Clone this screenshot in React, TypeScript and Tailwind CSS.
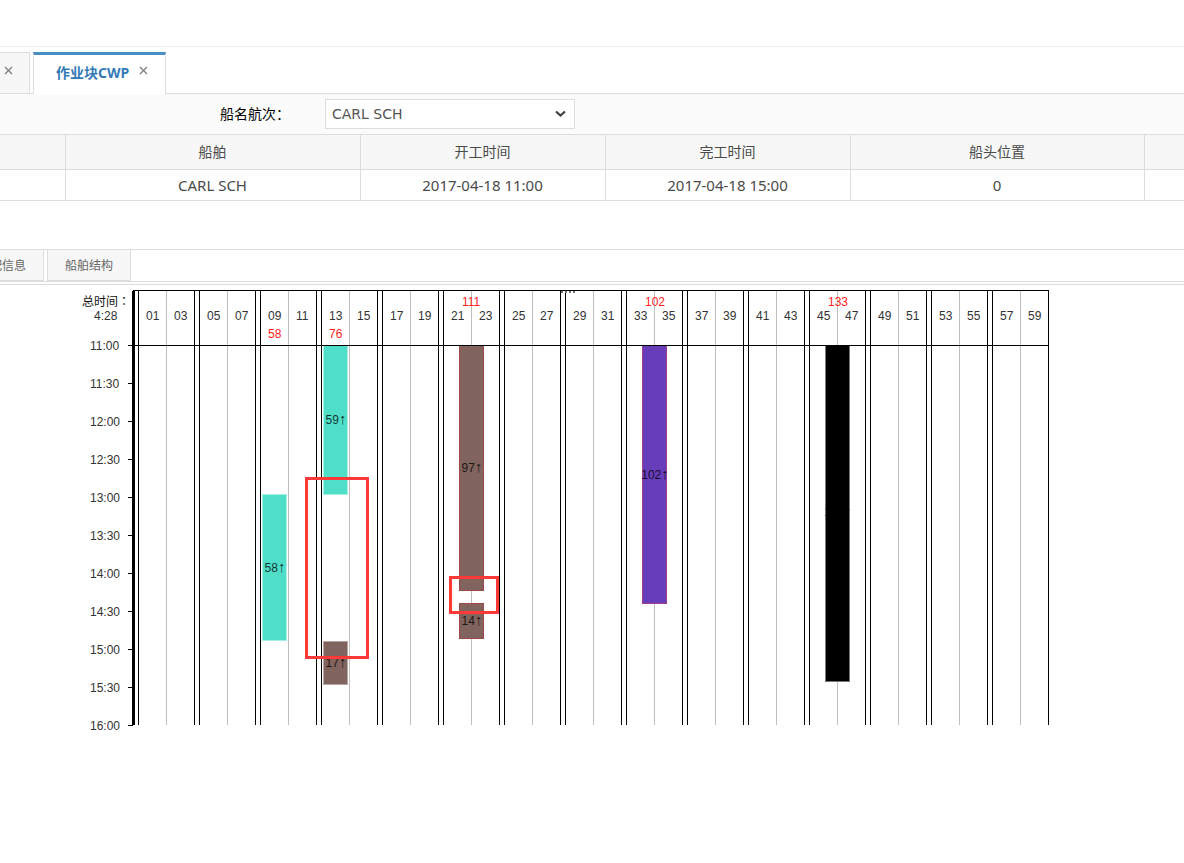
import React from "react";

type Block = {
  x: number;
  top: number;
  bottom: number;
  fill: string;
  stroke: string;
  label: string;
  baseline: number;
};

const BAY_PITCH = 61;
const FIRST_BAY = 68;
const AXIS_TOP = 59;

const bays = Array.from({ length: 15 }, (_, i) => ({
  x: FIRST_BAY + i * BAY_PITCH,
  left: String(i * 4 + 1).padStart(2, "0"),
  right: String(i * 4 + 3).padStart(2, "0"),
}));

const times = [
  "11:00",
  "11:30",
  "12:00",
  "12:30",
  "13:00",
  "13:30",
  "14:00",
  "14:30",
  "15:00",
  "15:30",
  "16:00",
];

const totals = [
  { x: 198, y: 52, value: "58" },
  { x: 259, y: 52, value: "76" },
  { x: 392, y: 20, value: "111" },
  { x: 575, y: 20, value: "102" },
  { x: 758, y: 20, value: "133" },
];

const blocks: Block[] = [
  { x: 192, top: 208, bottom: 355, fill: "#4fdfc9", stroke: "#a5efe4", label: "58", baseline: 286 },
  { x: 253, top: 59, bottom: 209, fill: "#4fdfc9", stroke: "#a5efe4", label: "59", baseline: 138 },
  { x: 253, top: 355, bottom: 399, fill: "#80645d", stroke: "#b5a5a1", label: "17", baseline: 381 },
  { x: 389, top: 59, bottom: 305, fill: "#80645d", stroke: "#a04848", label: "97", baseline: 186 },
  { x: 389, top: 317, bottom: 353, fill: "#80645d", stroke: "#a04848", label: "14", baseline: 339 },
  { x: 572, top: 59, bottom: 318, fill: "#673dba", stroke: "#a03f92", label: "102", baseline: 193 },
  { x: 755, top: 59, bottom: 396, fill: "#000000", stroke: "#777777", label: "133", baseline: 230 },
];

const columns = ["", "船舶", "开工时间", "完工时间", "船头位置", ""];
const voyage = ["", "CARL SCH", "2017-04-18 11:00", "2017-04-18 15:00", "0", ""];

function CloseIcon() {
  return (
    <svg width="9" height="9" viewBox="0 0 9 9" aria-hidden="true">
      <path d="M1 1l7 7M8 1L1 8" stroke="#7d7d85" strokeWidth="1.3" fill="none" />
    </svg>
  );
}

function WorkPlanChart() {
  return (
    <svg
      className="ml-[70px] block font-['Liberation_Sans','Noto_Sans_CJK_SC',sans-serif] text-xs"
      width="990"
      height="450"
      viewBox="0 0 990 450"
      role="img"
      aria-label="作业块CWP"
    >
      <g fill="#333333">
        <text x="12" y="20" fill="#111111">
          总时间
          <tspan className="font-['Noto_Sans_CJK_TC',sans-serif]">：</tspan>
        </text>
        <text x="24" y="34">4:28</text>
        {times.map((time, i) => (
          <text key={time} x="20" y={64 + i * 38}>
            {time}
          </text>
        ))}
      </g>

      <g shapeRendering="crispEdges">
        {bays.map((bay) => (
          <g key={bay.left}>
            <rect x={bay.x + 28} y="5" width="1" height="434" fill="#bfbfbf" />
            <rect x={bay.x} y="4" width="1" height="435" />
            <rect x={bay.x + 56} y="4" width="1" height="435" />
          </g>
        ))}
        <rect x="63" y="4" width="916" height="1" />
        <rect x="62" y="5" width="3" height="434" />
        {times.map((time, i) => (
          <rect key={time} x="58" y={AXIS_TOP + i * 38} width="5" height="1" />
        ))}
        {[491, 495, 499, 503].map((x) => (
          <rect key={x} x={x} y="5" width="2" height="2" fill="#777777" />
        ))}
      </g>

      <g fill="#333333">
        {bays.map((bay) => (
          <g key={bay.left}>
            <text x={bay.x + 8} y="34">{bay.left}</text>
            <text x={bay.x + 36} y="34">{bay.right}</text>
          </g>
        ))}
      </g>
      <g fill="#ff2222">
        {totals.map((total) => (
          <text key={total.x} x={total.x} y={total.y}>{total.value}</text>
        ))}
      </g>

      {blocks.map((block) => (
        <g key={block.label}>
          <g shapeRendering="crispEdges">
            <rect x={block.x} y={block.top} width="25" height={block.bottom - block.top} fill={block.stroke} />
            <rect x={block.x + 1} y={block.top + 1} width="23" height={block.bottom - block.top - 2} fill={block.fill} />
          </g>
          <text x={block.x + 13} y={block.baseline} textAnchor="middle" fill="#000000" fillOpacity="0.8">
            {block.label}
            <tspan fontSize="15">↑</tspan>
          </text>
        </g>
      ))}
      <rect x="63" y={AXIS_TOP} width="916" height="1" shapeRendering="crispEdges" />

      <g fill="none" stroke="#ff3838" strokeWidth="3">
        <rect x="236.5" y="192.5" width="61" height="179" />
        <rect x="380.5" y="291.5" width="47" height="35" />
      </g>
    </svg>
  );
}

export default function App() {
  return (
    <div className="min-h-screen overflow-x-hidden bg-white font-['Noto_Sans','Noto_Sans_CJK_SC',sans-serif] text-[#4a4a4a]">
      <header className="h-[47px] border-b border-[#eeeeee]" />

      <nav className="mt-[5px] flex h-[42px] items-stretch gap-[3px] border-b border-[#dddddd]">
        <div className="flex w-[30px] border-t border-r border-[#dddddd] bg-[#f7f7f7] pt-[13px] pl-1">
          <button type="button" aria-label="关闭" className="h-[9px] w-[9px]">
            <CloseIcon />
          </button>
        </div>
        <div className="-mb-px flex w-[133px] border-x border-t-3 border-x-[#dddddd] border-t-[#4a8fc3] bg-white pl-[22px]">
          <button type="button" className="h-9 text-sm leading-9 font-bold whitespace-nowrap text-[#337ab7]">
            作业块CWP
          </button>
          <button type="button" aria-label="关闭" className="mt-[11px] ml-[10px] h-[9px] w-[9px]">
            <CloseIcon />
          </button>
        </div>
      </nav>

      <main>
        <div className="flex h-10 items-center bg-[#fbfbfb] pl-[220px]">
          <label htmlFor="vessel" className="w-[105px] text-sm text-black">
            船名航次：
          </label>
          <div className="relative">
            <select
              id="vessel"
              className="block h-[30px] w-[250px] appearance-none border border-[#dddddd] bg-white px-1.5 font-['DejaVu_Sans',sans-serif] text-sm text-[#555555]"
            >
              <option>CARL SCH</option>
            </select>
            <svg className="pointer-events-none absolute top-[11px] right-2" width="12" height="8" viewBox="0 0 12 8" aria-hidden="true">
              <path d="M1 1.500L5.500 5.500l4.500-4" stroke="#404048" strokeWidth="2.200" fill="none" />
            </svg>
          </div>
        </div>

        <table className="w-full table-fixed border-collapse text-center">
          <colgroup>
            <col className="w-[65px]" />
            <col className="w-[295px]" />
            <col className="w-[245px]" />
            <col className="w-[245px]" />
            <col className="w-[294px]" />
            <col />
          </colgroup>
          <thead>
            <tr className="h-[35px] bg-[#f7f7f7] text-sm">
              {columns.map((name, i) => (
                <th key={i} className="border border-[#dddddd] p-0 font-normal first:border-l-0 last:border-r-0">
                  {name}
                </th>
              ))}
            </tr>
          </thead>
          <tbody>
            <tr className="h-[31px] text-[15px] leading-5">
              {voyage.map((value, i) => (
                <td key={i} className="border border-[#dddddd] p-0 first:border-l-0 last:border-r-0">
                  {value}
                </td>
              ))}
            </tr>
          </tbody>
        </table>

        <div className="mt-12 flex h-[33px] items-start gap-[3px] border-y border-[#dddddd] text-xs text-[#666666]">
          <button
            type="button"
            className="flex h-[31px] w-11 justify-end overflow-hidden border-r border-b border-[#dddddd] bg-[#f7f7f7] pr-[17px] leading-8 whitespace-nowrap"
          >
            分配信息
          </button>
          <button
            type="button"
            className="h-[31px] w-[84px] border-x border-b border-[#dddddd] bg-[#f7f7f7] leading-8 whitespace-nowrap"
          >
            船舶结构
          </button>
        </div>
        <section className="mt-0.5 border-t border-[#dddddd] pt-px">
          <WorkPlanChart />
        </section>
      </main>
    </div>
  );
}
